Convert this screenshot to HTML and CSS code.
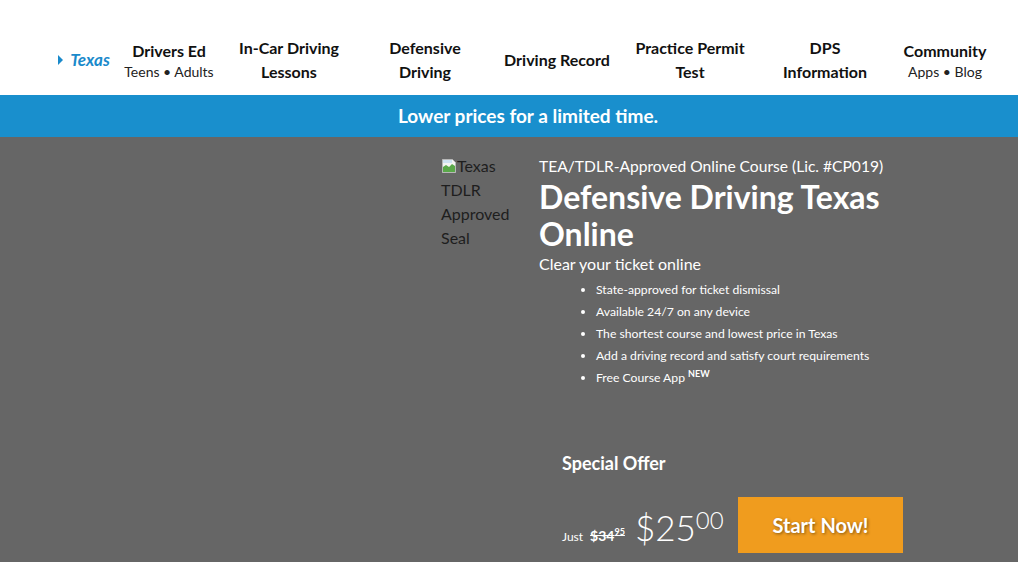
FILE: index.html
```html
<!DOCTYPE html>
<html lang="en">
<head>
<meta charset="utf-8">
<title>Defensive Driving Texas Online</title>
<link rel="stylesheet" href="styles.css">
</head>
<body>
<header class="site-header">
  <nav class="nav">
    <a class="nav-item nav-state" href="#"><span class="caret"></span>Texas</a>
    <a class="nav-item" href="#"><span class="nav-title">Drivers Ed</span><span class="nav-sub">Teens • Adults</span></a>
    <a class="nav-item" href="#"><span class="nav-title">In-Car Driving<br>Lessons</span></a>
    <a class="nav-item" href="#"><span class="nav-title">Defensive<br>Driving</span></a>
    <a class="nav-item" href="#"><span class="nav-title">Driving Record</span></a>
    <a class="nav-item" href="#"><span class="nav-title">Practice Permit<br>Test</span></a>
    <a class="nav-item" href="#"><span class="nav-title">DPS<br>Information</span></a>
    <a class="nav-item" href="#"><span class="nav-title">Community</span><span class="nav-sub">Apps • Blog</span></a>
  </nav>
</header>
<div class="promo-bar">Lower prices for a limited time.</div>
<main class="hero">
  <div class="seal">
    <svg class="broken-icon" width="16" height="16" viewBox="0 0 16 16" aria-hidden="true">
      <path d="M1.5 1.5h10l3 3v10h-13z" fill="#f4f4f4" stroke="#b8b8b8"/>
      <path d="M2 9l3-2 3 2 3-3 3 2v6H2z" fill="#5aa84a"/>
      <path d="M2 2h9v3H2z" fill="#cfe3f3"/>
    </svg><span class="seal-alt">Texas TDLR Approved Seal</span>
  </div>
  <div class="hero-body">
    <p class="eyebrow">TEA/TDLR-Approved Online Course (Lic. #CP019)</p>
    <h1 class="hero-title">Defensive Driving Texas Online</h1>
    <p class="hero-lead">Clear your ticket online</p>
    <ul class="features">
      <li>State-approved for ticket dismissal</li>
      <li>Available 24/7 on any device</li>
      <li>The shortest course and lowest price in Texas</li>
      <li>Add a driving record and satisfy court requirements</li>
      <li>Free Course App <sup class="new">NEW</sup></li>
    </ul>
    <div class="offer">
      <h2 class="offer-title">Special Offer</h2>
      <div class="offer-row">
        <div class="price">
          <span class="just">Just</span>
          <s class="old-price">$34<sup>95</sup></s>
          <span class="new-price">$25<sup>00</sup></span>
        </div>
        <a class="cta" href="#">Start Now!</a>
      </div>
    </div>
  </div>
</main>
</body>
</html>
```

FILE: styles.css
```css
* { box-sizing: border-box; }
html, body { margin: 0; padding: 0; }
body {
  font-family: Lato, "Open Sans", sans-serif;
  background: #666666;
  color: #fff;
  height: 562px;
  overflow: hidden;
}
a { text-decoration: none; color: inherit; }

.site-header {
  background: #fff;
  height: 95px;
  display: flex;
  align-items: center;
  padding-top: 24px;
}
.nav {
  display: grid;
  grid-template-columns: 68px 102px 138px 134px 130px 136px 134px 106px;
  margin-left: 50px;
  align-items: center;
}
.nav-item {
  display: flex;
  flex-direction: column;
  align-items: center;
  text-align: center;
  color: #111;
}
.nav-title {
  font-weight: 700;
  font-size: 16px;
  line-height: 24px;
}
.nav-sub {
  font-size: 14px;
  line-height: 18px;
  color: #222;
}
.nav-state {
  flex-direction: row;
  align-items: center;
  justify-content: center;
  color: #1a8acb;
  font-weight: 700;
  font-style: italic;
  font-size: 17px;
}
.caret {
  width: 0; height: 0;
  border-top: 5px solid transparent;
  border-bottom: 5px solid transparent;
  border-left: 5px solid #1a8acb;
  margin-right: 7px;
}

.promo-bar {
  background: #198fcd;
  height: 42px;
  line-height: 42px;
  text-align: center;
  padding-left: 38px;
  font-weight: 700;
  font-size: 19px;
  color: #fff;
}

.hero {
  display: flex;
  padding-left: 441px;
  padding-top: 17px;
}
.seal {
  width: 98px;
  font-size: 16px;
  line-height: 24px;
  color: #1e1e1e;
}
.broken-icon { vertical-align: -2px; }

.hero-body { width: 366px; }
.eyebrow {
  margin: 0;
  font-size: 15.6px;
  line-height: 24px;
}
.hero-title {
  margin: 0;
  font-size: 32px;
  line-height: 37px;
  font-weight: 700;
}
.hero-lead {
  margin: 0;
  font-size: 16px;
  line-height: 24px;
}
.features {
  margin: 3px 0 0;
  padding-left: 57px;
  font-size: 12.2px;
  line-height: 22px;
}
.new {
  font-size: 9px;
  font-weight: 700;
  line-height: 0;
}
.offer {
  padding-left: 23px;
  margin-top: 62px;
}
.offer-title {
  margin: 0;
  font-size: 18px;
  font-weight: 700;
  line-height: 24px;
}
.offer-row {
  display: flex;
  align-items: flex-end;
  margin-top: 22px;
}
.price {
  display: flex;
  align-items: baseline;
  width: 176px;
  padding-bottom: 6px;
}
.just { font-size: 12px; margin-right: 7px; }
.old-price {
  font-weight: 700;
  font-size: 14px;
  margin-right: 10px;
}
.old-price sup { font-size: 9px; }
.new-price {
  font-size: 35px;
  font-weight: 300;
  line-height: 40px;
}
.new-price sup { font-size: 24px; vertical-align: 12px; line-height: 0; }
.cta {
  display: flex;
  align-items: center;
  justify-content: center;
  width: 165px;
  height: 56px;
  background: #f09c1e;
  color: #fff;
  font-weight: 700;
  font-size: 20px;
  text-shadow: 1px 1px 3px rgba(0,0,0,0.45);
}
```
